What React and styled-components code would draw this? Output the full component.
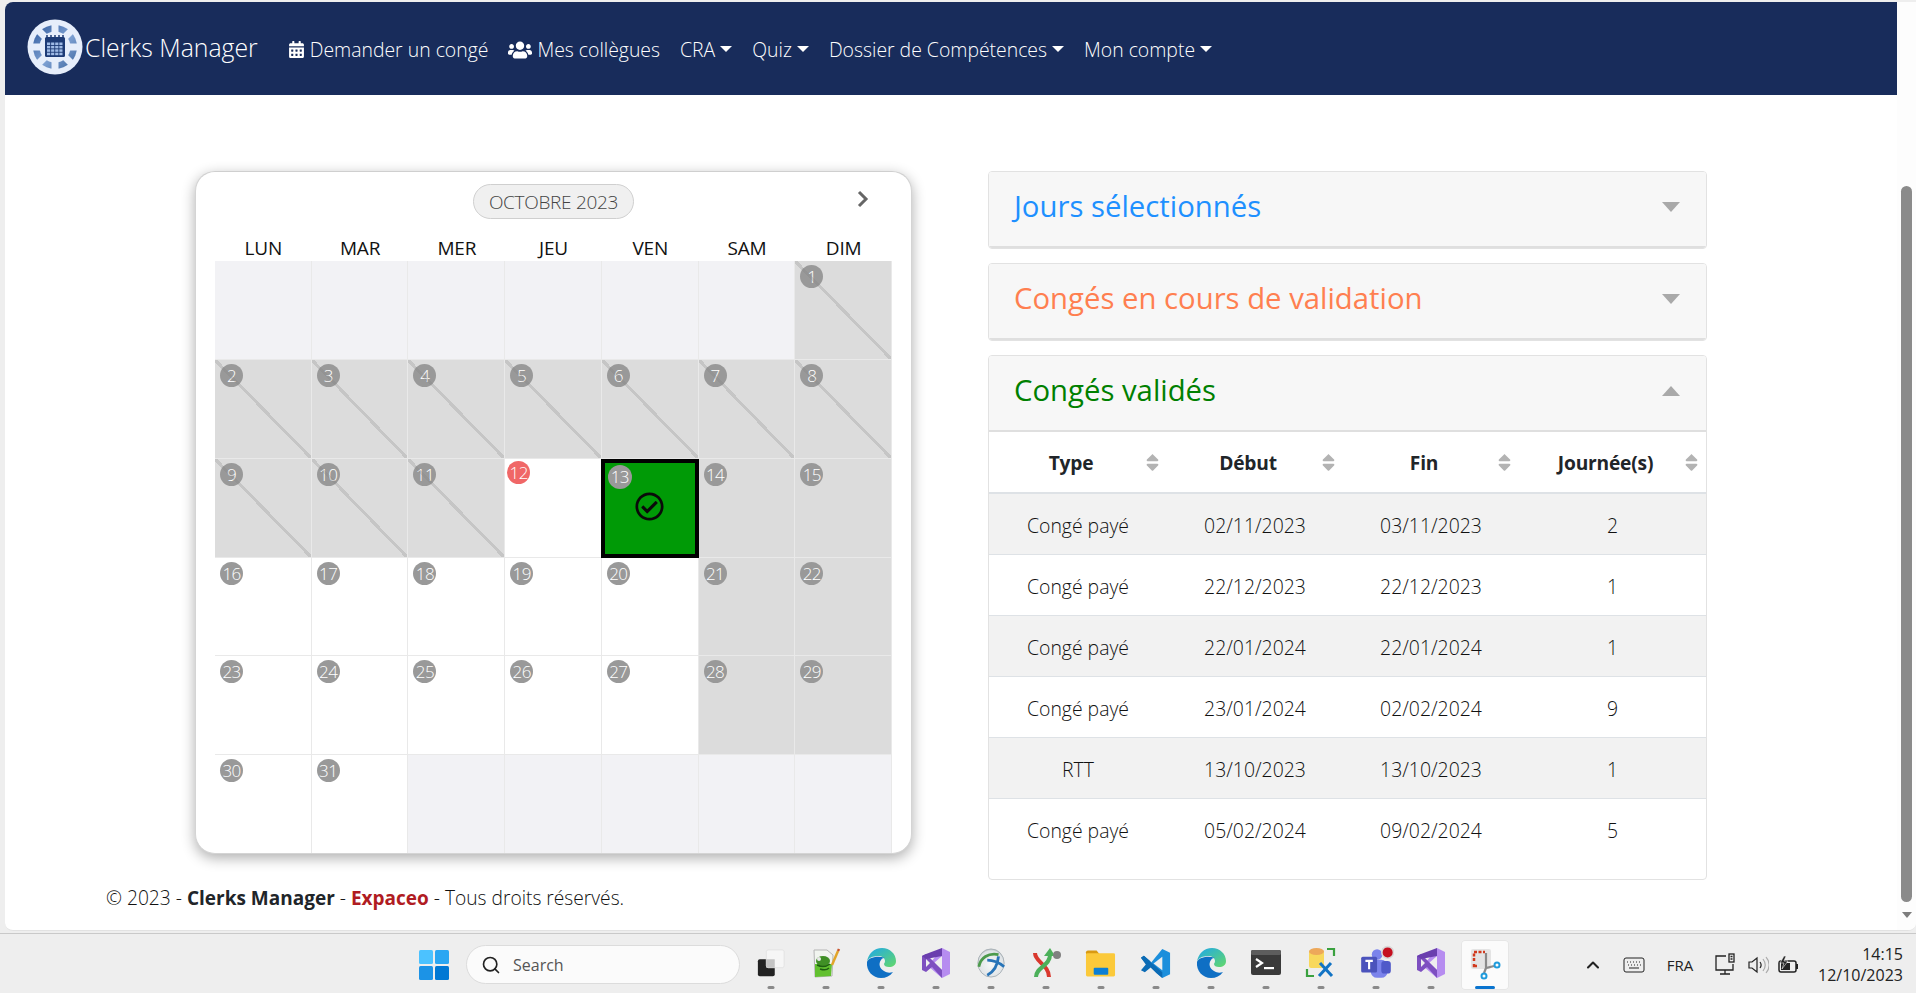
import React from 'react'
import styled, { createGlobalStyle } from 'styled-components'
import { FaCalendarAlt, FaUsers, FaSortUp, FaSortDown, FaRegCheckCircle } from 'react-icons/fa'
import { FiSearch, FiChevronUp } from 'react-icons/fi'

const GlobalStyle = createGlobalStyle`
  html, body {
    margin: 0;
    padding: 0;
    height: 993px;
    overflow: hidden;
    background: #eeeeee;
  }
  * { box-sizing: border-box; }
  body {
    font-family: "Open Sans", "Noto Sans", "Liberation Sans", sans-serif;
    font-weight: 300;
    color: #111;
  }
`

const Screen = styled.div`
  width: 1916px;
  height: 993px;
  display: flex;
  flex-direction: column;
  background: #eeeeee;
`

const Win = styled.div`
  height: 929px;
  margin: 2px 0 0 5px;
  display: flex;
  background: #fff;
  border-bottom: 1px solid #e2e2e2;
  border-radius: 8px 0 8px 8px;
  overflow: hidden;
`

const Main = styled.div`
  flex: 1;
  min-width: 0;
  display: flex;
  flex-direction: column;
`

const ScrollTrack = styled.div`
  width: 19px;
  background: #fdfdfd;
  display: flex;
  flex-direction: column;
  align-items: center;
  padding-top: 184px;
`

const ScrollThumb = styled.div`
  width: 11px;
  height: 716px;
  border-radius: 6px;
  background: #8b8b8b;
`

const ScrollArrow = styled.div`
  margin-top: 10px;
  width: 0;
  height: 0;
  border-left: 5px solid transparent;
  border-right: 5px solid transparent;
  border-top: 6px solid #7d7d7d;
`

const Nav = styled.nav`
  height: 93px;
  background: #182c5b;
  display: flex;
  align-items: center;
  padding-left: 22px;
  color: #fff;
  flex: none;
`

const Brand = styled.div`
  display: flex;
  align-items: center;
  margin-right: 30px;
  font-size: 24.8px;
  margin-top: -4px;
  gap: 2px;
`

const NavLinks = styled.div`
  display: flex;
  align-items: center;
  gap: 20px;
  margin-top: 2px;
`

const NavLink = styled.div`
  display: flex;
  align-items: center;
  font-size: 19.4px;
  white-space: nowrap;
  svg { margin-right: 5px; flex: none; }
`

const Caret = styled.span`
  width: 0;
  height: 0;
  margin-left: 5px;
  border-left: 6px solid transparent;
  border-right: 6px solid transparent;
  border-top: 6px solid #fff;
  margin-top: -2px;
`

const Content = styled.div`
  flex: none;
  display: flex;
  align-items: flex-start;
  padding: 76px 0 0 190px;
`

const CalendarCard = styled.section`
  width: 717px;
  height: 683px;
  flex: none;
  margin-right: 76px;
  border: 1px solid #d4d4d4;
  border-top-color: #cfcfcf;
  border-radius: 20px;
  background: #fff;
  box-shadow: 0 4px 14px rgba(0, 0, 0, 0.32);
  padding: 0 19px;
  overflow: hidden;
  position: relative;
`

const CalendarHead = styled.div`
  height: 63px;
  display: flex;
  align-items: center;
  justify-content: center;
  position: relative;
  padding-bottom: 4px;
`

const MonthPill = styled.div`
  width: 161px;
  height: 35px;
  border: 1px solid #cfcfcf;
  border-radius: 18px;
  background: #f0f0f0;
  color: #444;
  font-size: 19px;
  letter-spacing: -0.3px;
  display: flex;
  align-items: center;
  justify-content: center;
`

const NextBtn = styled.div`
  position: absolute;
  right: 23px;
  top: 18px;
  width: 12px;
  height: 18px;
  display: flex;
`

const Weekdays = styled.div`
  display: grid;
  grid-template-columns: repeat(7, 1fr);
  height: 26px;
`

const Weekday = styled.div`
  text-align: center;
  font-size: 19px;
  line-height: 26px;
  letter-spacing: -0.2px;
  color: #111;
  font-weight: 400;
`

const DayGrid = styled.div`
  display: grid;
  grid-template-columns: repeat(7, 1fr);
  grid-auto-rows: 98.85px;
  width: 677px;
`

const cellColors = {
  empty: '#f2f2f5',
  off: '#dcdcdc',
  hatch: '#dcdcdc',
  open: '#ffffff',
  today: '#ffffff',
  picked: '#009a06'
}

const Cell = styled.div`
  position: relative;
  background: ${p => cellColors[p.$kind]};
  border-right: 1px solid #e9e9e9;
  border-bottom: 1px solid #e9e9e9;
  ${p => p.$kind === 'picked' && 'border: 4px solid #000; margin: 0 0 0 -1px;'}
  ${p => p.$kind === 'hatch' && `
    &::after {
      content: '';
      position: absolute;
      inset: 0;
      background: linear-gradient(
        to top right,
        transparent calc(50% - 1.5px),
        rgba(130, 130, 130, 0.25) calc(50% - 1.5px),
        rgba(130, 130, 130, 0.25) calc(50% + 1.5px),
        transparent calc(50% + 1.5px)
      );
    }
  `}
`

const DayBadge = styled.span`
  position: absolute;
  top: ${p => (p.$kind === 'today' ? '2px' : '4px')};
  left: ${p => (p.$kind === 'today' ? '2px' : '5px')};
  width: 23px;
  height: 23px;
  border-radius: 50%;
  background: ${p => (p.$kind === 'today' ? '#f06767' : '#999999')};
  color: #fff;
  font-size: 17px;
  letter-spacing: -0.6px;
  line-height: 23px;
  text-align: center;
  ${p => p.$kind === 'picked' && 'top: 2px; left: 3px; width: 24px; height: 24px; line-height: 24px;'}
`

const CheckMark = styled.div`
  position: absolute;
  top: 29px;
  left: 0;
  right: 0;
  display: flex;
  justify-content: center;
  color: #0a0a0a;
  font-size: 29px;
  line-height: 1;
`

const Side = styled.div`
  width: 719px;
  flex: none;
  display: flex;
  flex-direction: column;
  gap: 14px;
`

const Panel = styled.section`
  border: 1px solid #e2e2e2;
  border-radius: 4px;
  background: #fff;
  overflow: hidden;
`

const PanelHead = styled.div`
  height: 76px;
  display: flex;
  align-items: center;
  justify-content: space-between;
  padding: 0 26px 7px 25px;
  background: #f7f7f7;
  border-bottom: 2px solid #dfdfdf;
`

const PanelTitle = styled.h2`
  margin: 0;
  font-weight: 400;
  font-size: 29.3px;
  color: ${p => p.$color};
`

const Arrow = styled.span`
  width: 0;
  height: 0;
  margin-top: 2px;
  border-left: 9px solid transparent;
  border-right: 9px solid transparent;
  ${p => (p.$up ? 'border-bottom: 10px solid #a9a9a9;' : 'border-top: 10px solid #a9a9a9;')}
`

const Table = styled.table`
  width: 100%;
  border-collapse: collapse;
  table-layout: fixed;
  margin-bottom: 20px;
`

const Th = styled.th`
  position: relative;
  width: ${p => p.$w}px;
  height: 61px;
  padding: 0 14px 0 0;
  text-align: center;
  font-size: 19.2px;
  font-weight: 700;
  letter-spacing: -0.2px;
  border-bottom: 2px solid #dee2e6;
  color: #212529;
`

const SortIcon = styled.span`
  position: absolute;
  right: 12px;
  top: 20px;
  width: 13px;
  height: 21px;
  color: #b3b3b3;
  font-size: 21px;
  svg { position: absolute; left: 0; top: 0; }
`

const Tr = styled.tr`
  height: 61px;
  background: ${p => (p.$striped ? '#f2f2f2' : '#fff')};
  border-bottom: 1px solid #dee2e6;
  &:last-child { border-bottom: none; }
`

const Td = styled.td`
  text-align: center;
  font-size: 19.4px;
  padding: 3px 0 0;
  color: #111;
`

const Footer = styled.footer`
  margin: 5px 0 0 101px;
  font-size: 19.2px;
  line-height: 26px;
  color: #111;
`

const Brandline = styled.b`
  font-weight: 700;
  font-size: 19px;
  color: ${p => (p.$red ? '#b01c22' : '#212529')};
`

const Taskbar = styled.footer`
  flex: 1;
  margin-top: 2px;
  border-top: 1px solid #c9c9c9;
  background: #eeeeee;
  display: flex;
  align-items: center;
  padding: 2px 0 0 418px;
  position: relative;
  font-weight: 400;
`

const StartBtn = styled.div`
  width: 32px;
  height: 32px;
  margin-right: 16px;
  flex: none;
`

const SearchBox = styled.div`
  width: 274px;
  height: 39px;
  flex: none;
  display: flex;
  align-items: center;
  gap: 12px;
  padding-left: 14px;
  margin-right: 3px;
  background: #fbfbfb;
  border: 1px solid #dcdcdc;
  border-radius: 20px;
  font-size: 16px;
  color: #555;
  svg { color: #222; }
`

const Apps = styled.div`
  display: flex;
  align-items: center;
`

const AppSlot = styled.div`
  position: relative;
  width: 55px;
  height: 50px;
  display: flex;
  align-items: center;
  justify-content: center;
  padding-bottom: 3px;
  border-radius: 4px;
  ${p => p.$active && 'background: #fbfbfb; box-shadow: 0 0 0 1px #e6e6e6 inset; width: 48px; margin: 0 3px;'}
  &::after {
    content: '';
    position: absolute;
    bottom: 1px;
    left: 50%;
    transform: translateX(-50%);
    width: ${p => (p.$active ? '20px' : '7px')};
    height: 3px;
    border-radius: 2px;
    background: ${p => (p.$active ? '#0a74cf' : '#8a8a8a')};
  }
`

const Tray = styled.div`
  margin-left: 61px;
  display: flex;
  align-items: center;
  color: #222;
  font-size: 15px;
`

const TrayItem = styled.div`
  width: ${p => p.$w}px;
  display: flex;
  justify-content: center;
  align-items: center;
`

const Clock = styled.div`
  margin-left: 13px;
  text-align: right;
  font-size: 16px;
  line-height: 21px;
  color: #222;
`

const spokes = [0, 45, 90, 135, 180, 225, 270, 315]

const Logo = () => (
  <svg width="56" height="56" viewBox="0 0 56 56">
    <defs>
      <linearGradient id="logoDisc" x1="0" y1="0" x2="1" y2="1">
        <stop offset="0" stopColor="#2f5a9c" />
        <stop offset="0.55" stopColor="#7fa2d4" />
        <stop offset="1" stopColor="#3d679f" />
      </linearGradient>
    </defs>
    <circle cx="28" cy="28" r="27.500" fill="#e6eefb" />
    <circle cx="28" cy="28" r="22" fill="url(#logoDisc)" />
    {spokes.map(a => (
      <rect key={a} x="24.500" y="5" width="7" height="12" fill="#e6eefb" transform={`rotate(${a} 28 28)`} />
    ))}
    <circle cx="28" cy="28" r="15.500" fill="#e6eefb" />
    <rect x="18" y="18" width="20" height="20" rx="1.500" fill="#1d3b76" />
    {[20, 24, 28, 32, 36].map(x => <rect key={x} x={x - 0.75} y="16" width="1.500" height="4" fill="#1d3b76" />)}
    {[0, 1, 2, 3].map(r => [0, 1, 2, 3].map(c => (
      <rect key={`${r}${c}`} x={20 + c * 4.1} y={23.500 + r * 3.4} width="3.200" height="2.500" fill="#9fbbe6" />
    )))}
  </svg>
)

const NextChevron = () => (
  <svg viewBox="0 0 12 18" width="12" height="18" fill="none" stroke="#666" strokeWidth="3">
    <path d="M2 2l7 7-7 7" />
  </svg>
)

const SortBoth = () => (
  <SortIcon>
    <FaSortUp />
    <FaSortDown />
  </SortIcon>
)

const WinLogo = () => (
  <svg viewBox="0 0 32 32" width="32" height="32">
    <rect x="1" y="1" width="14" height="14" rx="1.5" fill="#4cc2ff" />
    <rect x="17" y="1" width="14" height="14" rx="1.5" fill="#2aa6f2" />
    <rect x="1" y="17" width="14" height="14" rx="1.5" fill="#1c93e6" />
    <rect x="17" y="17" width="14" height="14" rx="1.5" fill="#0078d4" />
  </svg>
)

const TaskView = () => (
  <svg viewBox="0 0 32 32" width="30" height="30">
    <rect x="2" y="12" width="18" height="18" rx="2" fill="#222" />
    <rect x="11" y="2" width="19" height="19" rx="2" fill="#f6f6f6" stroke="#e2e2e2" />
    <rect x="11" y="12" width="9" height="9" fill="#c4c4c4" />
  </svg>
)

const NotepadPP = () => (
  <svg viewBox="0 0 32 32" width="32" height="34">
    <path d="M4 3h13l6 5-1 21-17 1z" fill="#f1f4ef" stroke="#b5b5b5" />
    <path d="M5 17h17l-1 12-16 1z" fill="#62c02f" />
    <ellipse cx="13" cy="14" rx="7" ry="5" fill="#3f8f25" />
    <circle cx="9" cy="12" r="2" fill="#e9e9e9" />
    <path d="M7 18c4 2 9 2 13-1M10 22c3 1 7 1 9-1" stroke="#1e5f12" strokeWidth="1.500" fill="none" />
    <path d="M22 18l6-14" stroke="#e2a52a" strokeWidth="2.500" />
    <path d="M28 4l1-2" stroke="#c8532b" strokeWidth="2.500" />
  </svg>
)

const Edge = () => (
  <svg viewBox="0 0 32 32" width="32" height="32">
    <defs>
      <linearGradient id="edgeA" x1="0" y1="0" x2="1" y2="1">
        <stop offset="0" stopColor="#1fa8ea" />
        <stop offset="1" stopColor="#63d86a" />
      </linearGradient>
    </defs>
    <path d="M2 15C3 7 9 1 17 1c8 0 14 6 14 13 0 4-3 6-7 6-3 0-5-1-5-3 0-1 1-1 1-3 0-3-3-5-7-5-5 0-10 2-11 6z" fill="url(#edgeA)" />
    <path d="M2 15c-1 9 6 16 14 16 5 0 9-2 12-6-3 1-6 1-9-1-4-2-6-7-3-11 1-2 3-2 4-2-8-3-17 0-18 4z" fill="#0f6fc4" />
  </svg>
)

const VisualStudio = () => (
  <svg viewBox="0 0 32 32" width="32" height="32">
    <path d="M22 1l8 4v22l-8 4-14-12z" fill="#b68cf0" />
    <path d="M22 9v14l-8-7z" fill="#eeeeee" />
    <path d="M2 9l4-2 16 16v8L12 20l-6 5-4-2z" fill="#7d4fc0" />
    <path d="M6 12v8l4-4z" fill="#eeeeee" />
    <path d="M2 9l4-2 16-6v8L6 12v0z" fill="#6a3eae" />
  </svg>
)

const GlobeApp = () => (
  <svg viewBox="0 0 32 32" width="30" height="32">
    <defs>
      <radialGradient id="globeA" cx="0.500" cy="0.550" r="0.600">
        <stop offset="0" stopColor="#f7f8f8" />
        <stop offset="0.800" stopColor="#dfe3e6" />
        <stop offset="1" stopColor="#9aa2a7" />
      </radialGradient>
    </defs>
    <ellipse cx="16" cy="16" rx="14" ry="15" fill="url(#globeA)" stroke="#a8b0b5" />
    <path d="M3 20C5 10 13 5 24 7" stroke="#4c9a4c" strokeWidth="3" fill="none" />
    <path d="M12 29c6-3 11-9 12-20M12 13c6 0 12 2 18 7" stroke="#2874b8" strokeWidth="3" fill="none" />
  </svg>
)

const GitApp = () => (
  <svg viewBox="0 0 32 32" width="32" height="34">
    <path d="M5 6c0 9 14 12 14 24" stroke="#d9382e" strokeWidth="4" fill="none" />
    <path d="M6 30c0-10 14-11 14-22" stroke="#4cb05a" strokeWidth="4" fill="none" />
    <path d="M14 9l6-8 5 8z" fill="#4cb05a" />
    <circle cx="27" cy="8" r="4" fill="#808080" />
  </svg>
)

const Folder = () => (
  <svg viewBox="0 0 32 32" width="31" height="32">
    <path d="M1 5c0-1 1-2 2-2h9l3 4H1z" fill="#d99a12" />
    <rect x="1" y="6" width="30" height="24" rx="1.5" fill="#fbc93a" />
    <rect x="9" y="21" width="15" height="7" rx="1" fill="#0c7fd4" />
  </svg>
)

const VsCode = () => (
  <svg viewBox="0 0 32 32" width="31" height="31">
    <path d="M23 1l8 4v22l-8 4-14-13z" fill="#1c8fdc" />
    <path d="M23 9v14l-9-7z" fill="#eeeeee" />
    <path d="M1 10l3-2 19 17v6l-6-5-6-6-6 5-4-2 5-6z" fill="#0b6bb5" />
    <path d="M4 8l7 6-4 3-6-7z" fill="#0b6bb5" />
  </svg>
)

const Terminal = () => (
  <svg viewBox="0 0 32 32" width="32" height="32">
    <rect x="1" y="3" width="30" height="25" rx="2" fill="#3a3a3a" />
    <rect x="1" y="3" width="30" height="5" rx="1.500" fill="#5d5d5d" />
    <path d="M6 12l6 4-6 4" stroke="#fff" strokeWidth="2.200" fill="none" />
    <rect x="14" y="20" width="10" height="2.200" fill="#fff" />
  </svg>
)

const SqlTool = () => (
  <svg viewBox="0 0 32 32" width="32" height="32">
    <rect x="4" y="3" width="15" height="18" rx="2" fill="#f8d85c" />
    <ellipse cx="11.500" cy="4.500" rx="7.500" ry="3.500" fill="#eda85a" />
    <path d="M22 2h7v7M2 22v7h7" stroke="#3aa13f" strokeWidth="2.200" fill="none" />
    <path d="M14 29l12-13M27 29L15 16" stroke="#1173c4" strokeWidth="3" />
  </svg>
)

const Teams = () => (
  <svg viewBox="0 0 34 34" width="36" height="36">
    <circle cx="18" cy="9" r="5" fill="#7b83eb" />
    <rect x="12" y="14" width="16" height="17" rx="6" fill="#7b83eb" />
    <rect x="22" y="15" width="9" height="12" rx="3" fill="#5059c9" />
    <rect x="3" y="11" width="15" height="15" rx="1.5" fill="#4b53bc" />
    <path d="M7 15h7M10.500 15v8" stroke="#fff" strokeWidth="2" />
    <circle cx="28" cy="7" r="5.500" fill="#c50f1f" stroke="#d8d8d8" strokeWidth="1.5" />
  </svg>
)

const Snip = () => (
  <svg viewBox="0 0 32 32" width="32" height="34">
    <rect x="2" y="2" width="20" height="20" rx="2" fill="#e4e4e4" />
    <path d="M5 14V5h11" stroke="#d13a1e" strokeWidth="2.500" strokeDasharray="3 1.500" fill="none" />
    <path d="M5 17v2h3" stroke="#d13a1e" strokeWidth="2.500" fill="none" />
    <path d="M17 6v15l8-2M17 21l-2 5" stroke="#8a8a8a" strokeWidth="2.200" fill="none" />
    <circle cx="28" cy="18" r="2.500" stroke="#1f9bdc" strokeWidth="2" fill="none" />
    <circle cx="15" cy="29" r="2.500" stroke="#1f9bdc" strokeWidth="2" fill="none" />
  </svg>
)

const Chevron = () => <FiChevronUp size={20} strokeWidth={2.5} />

const Keyboard = () => (
  <svg viewBox="0 0 22 16" width="22" height="16" fill="none" stroke="#222">
    <rect x="1" y="1" width="20" height="14" rx="2" />
    <path d="M4 5h1M7 5h1M10 5h1M13 5h1M16 5h1M5 8h1M8 8h1M11 8h1M14 8h1M17 8h1M6 11h10" />
  </svg>
)

const Monitor = () => (
  <svg viewBox="0 0 22 24" width="22" height="24" fill="none" stroke="#222" strokeWidth="1.300">
    <path d="M12 3H2v14h17v-6M11 17v4M6 21h10" />
    <rect x="15" y="1" width="5" height="8" />
    <path d="M16.500 3.500h2M16.500 6h2" />
  </svg>
)

const Speaker = () => (
  <svg viewBox="0 0 22 22" width="22" height="22" fill="none" stroke="#222" strokeWidth="1.200">
    <path d="M2 8v6h3l5 4V4L5 8z" />
    <path d="M13 8c1.500 2 1.500 4 0 6" />
    <path d="M16 5c3 4 3 8 0 12M19 3c4 5 4 11 0 16" stroke="#aaa" />
  </svg>
)

const Battery = () => (
  <svg viewBox="0 0 22 20" width="22" height="20">
    <rect x="2" y="6" width="17" height="11" rx="2" fill="none" stroke="#222" strokeWidth="1.500" />
    <rect x="19" y="9" width="2" height="5" fill="#222" />
    <rect x="4" y="8" width="9" height="7" fill="#222" />
    <path d="M7 1L3 8h4l-2 6 6-8H7l2-5z" fill="#222" stroke="#eee" strokeWidth="0.600" />
  </svg>
)

const appIcons = [TaskView, NotepadPP, Edge, VisualStudio, GlobeApp, GitApp, Folder, VsCode, Edge, Terminal, SqlTool, Teams, VisualStudio]

const hatched = [1, 2, 3, 4, 5, 6, 7, 8, 9, 10, 11]
const weekend = [14, 15, 21, 22, 28, 29]

const dayKind = d => {
  if (hatched.includes(d)) return 'hatch'
  if (weekend.includes(d)) return 'off'
  if (d === 12) return 'today'
  if (d === 13) return 'picked'
  return 'open'
}

const days = [
  ...Array(6).fill(null),
  ...Array.from({ length: 31 }, (_, i) => i + 1),
  ...Array(5).fill(null)
]

const rows = [
  ['Congé payé', '02/11/2023', '03/11/2023', '2'],
  ['Congé payé', '22/12/2023', '22/12/2023', '1'],
  ['Congé payé', '22/01/2024', '22/01/2024', '1'],
  ['Congé payé', '23/01/2024', '02/02/2024', '9'],
  ['RTT', '13/10/2023', '13/10/2023', '1'],
  ['Congé payé', '05/02/2024', '09/02/2024', '5']
]

const columns = [
  { label: 'Type', w: 178 },
  { label: 'Début', w: 176 },
  { label: 'Fin', w: 176 },
  { label: 'Journée(s)', w: 187 }
]

const App = () => {
  return (
    <Screen>
      <GlobalStyle />
      <Win>
        <Main>
          <Nav>
            <Brand>
              <Logo />
              Clerks Manager
            </Brand>
            <NavLinks>
              <NavLink><FaCalendarAlt size={17} />Demander un congé</NavLink>
              <NavLink><FaUsers size={24} />Mes collègues</NavLink>
              <NavLink>CRA<Caret /></NavLink>
              <NavLink>Quiz<Caret /></NavLink>
              <NavLink>Dossier de Compétences<Caret /></NavLink>
              <NavLink>Mon compte<Caret /></NavLink>
            </NavLinks>
          </Nav>
          <Content>
            <CalendarCard>
              <CalendarHead>
                <MonthPill>OCTOBRE 2023</MonthPill>
                <NextBtn><NextChevron /></NextBtn>
              </CalendarHead>
              <Weekdays>
                {['LUN', 'MAR', 'MER', 'JEU', 'VEN', 'SAM', 'DIM'].map(d => (
                  <Weekday key={d}>{d}</Weekday>
                ))}
              </Weekdays>
              <DayGrid>
                {days.map((d, i) => {
                  if (!d) return <Cell key={i} $kind="empty" />
                  const kind = dayKind(d)
                  return (
                    <Cell key={i} $kind={kind}>
                      <DayBadge $kind={kind}>{d}</DayBadge>
                      {kind === 'picked' && <CheckMark><FaRegCheckCircle /></CheckMark>}
                    </Cell>
                  )
                })}
              </DayGrid>
            </CalendarCard>
            <Side>
              <Panel>
                <PanelHead>
                  <PanelTitle $color="#1e90ff">Jours sélectionnés</PanelTitle>
                  <Arrow />
                </PanelHead>
              </Panel>
              <Panel>
                <PanelHead>
                  <PanelTitle $color="#ff7f50">Congés en cours de validation</PanelTitle>
                  <Arrow />
                </PanelHead>
              </Panel>
              <Panel>
                <PanelHead>
                  <PanelTitle $color="#008000">Congés validés</PanelTitle>
                  <Arrow $up />
                </PanelHead>
                <Table>
                  <thead>
                    <tr>
                      {columns.map(c => (
                        <Th key={c.label} $w={c.w}>
                          {c.label}
                          <SortBoth />
                        </Th>
                      ))}
                    </tr>
                  </thead>
                  <tbody>
                    {rows.map((r, i) => (
                      <Tr key={i} $striped={i % 2 === 0}>
                        {r.map((v, j) => <Td key={j}>{v}</Td>)}
                      </Tr>
                    ))}
                  </tbody>
                </Table>
              </Panel>
            </Side>
          </Content>
          <Footer>
            © 2023 - <Brandline>Clerks Manager</Brandline> - <Brandline $red>Expaceo</Brandline> - Tous droits réservés.
          </Footer>
        </Main>
        <ScrollTrack>
          <ScrollThumb />
          <ScrollArrow />
        </ScrollTrack>
      </Win>
      <Taskbar>
        <StartBtn><WinLogo /></StartBtn>
        <SearchBox><FiSearch size={20} />Search</SearchBox>
        <Apps>
          {appIcons.map((Icon, i) => (
            <AppSlot key={i}><Icon /></AppSlot>
          ))}
          <AppSlot $active><Snip /></AppSlot>
        </Apps>
        <Tray>
          <TrayItem $w={40}><Chevron /></TrayItem>
          <TrayItem $w={42}><Keyboard /></TrayItem>
          <TrayItem $w={50}>FRA</TrayItem>
          <TrayItem $w={40}><Monitor /></TrayItem>
          <TrayItem $w={26}><Speaker /></TrayItem>
          <TrayItem $w={34}><Battery /></TrayItem>
          <Clock>14:15<br />12/10/2023</Clock>
        </Tray>
      </Taskbar>
    </Screen>
  )
}

export default App
